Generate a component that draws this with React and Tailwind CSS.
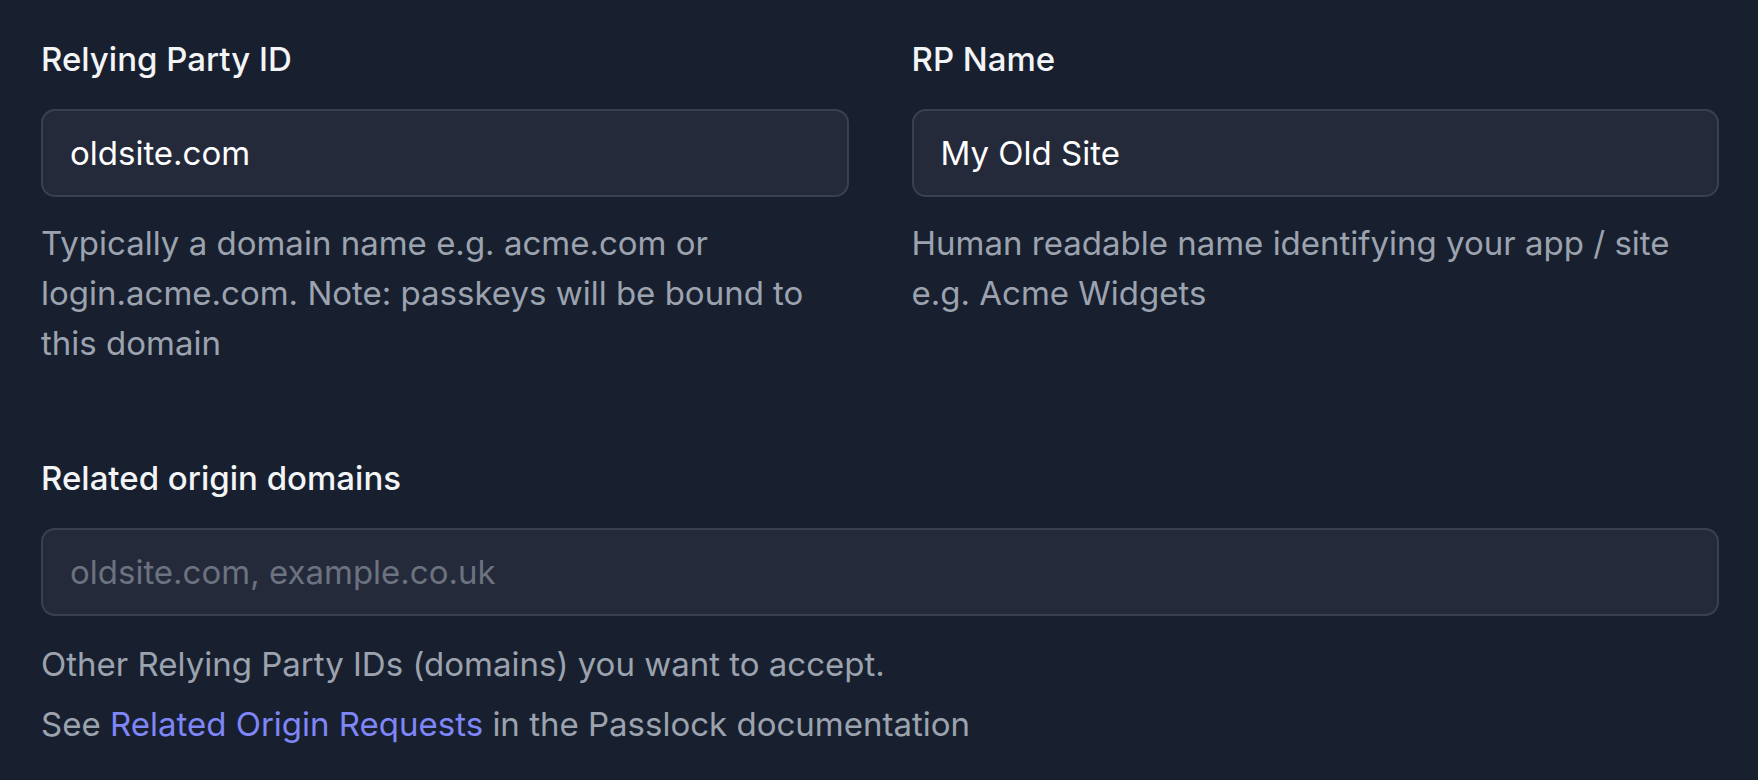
import React from "react";

const Field = ({ label, value, placeholder, children, className = "" }) => {
  return (
    <div className={"flex flex-col " + className}>
      <label className="text-[33px] leading-[48px] font-medium text-[#f3f4f6]">{label}</label>
      <input
        type="text"
        defaultValue={value}
        placeholder={placeholder}
        className="mt-[26px] h-[88px] w-full rounded-[14px] border-2 border-[#3a4051] bg-[#252a3a] px-[27px] text-[33px] text-white placeholder:text-[#6b7280] outline-none"
      />
      {children}
    </div>
  );
};

const App = () => {
  return (
    <div className="min-h-screen bg-[#182030] pl-[41px] pr-[39px] pt-[35px] font-['Inter',sans-serif]">
      <div className="grid grid-cols-2 gap-x-[63px]">
        <Field label="Relying Party ID" value="oldsite.com">
          <p className="mt-[21px] text-[33px] leading-[50px] text-[#9ca3af]">
            Typically a domain name e.g. acme.com or login.acme.com. Note: passkeys will be bound to this domain
          </p>
        </Field>
        <Field label="RP Name" value="My Old Site">
          <p className="mt-[21px] text-[33px] leading-[50px] text-[#9ca3af]">
            Human readable name identifying your app / site e.g. Acme Widgets
          </p>
        </Field>
      </div>
      <Field label="Related origin domains" placeholder="oldsite.com, example.co.uk" className="mt-[86px]">
        <p className="mt-[23px] text-[33px] leading-[50px] text-[#9ca3af]">
          Other Relying Party IDs (domains) you want to accept.
        </p>
        <p className="mt-[10px] text-[33px] leading-[50px] text-[#9ca3af]">
          See{" "}
          <a href="#" className="text-[#7f86f7]">
            Related Origin Requests
          </a>{" "}
          in the Passlock documentation
        </p>
      </Field>
    </div>
  );
};

export default App;
